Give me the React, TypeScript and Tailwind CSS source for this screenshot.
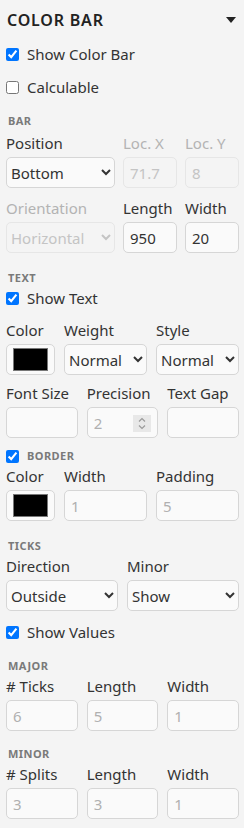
import React from "react";

const font = { fontFamily: '"Noto Sans", "Open Sans", sans-serif' };

const SectionLabel: React.FC<{ text: string; className?: string }> = ({ text, className }) => (
  <div className={`text-[11px] leading-[14px] font-bold tracking-[0.04em] uppercase text-[#7a7a7a] ${className ?? ""}`}>
    {text}
  </div>
);

const Check: React.FC<{ label: string; checked?: boolean; className?: string }> = ({ label, checked, className }) => (
  <label className={`flex items-center gap-2 h-5 text-[15px] text-[#333] ${className ?? ""}`}>
    <input type="checkbox" defaultChecked={checked} className="w-[13px] h-[13px] m-0 accent-[#0075ff]" />
    <span>{label}</span>
  </label>
);

const FieldLabel: React.FC<{ text: string; disabled?: boolean }> = ({ text, disabled }) => (
  <div className={`h-5 leading-5 text-[15px] whitespace-nowrap ${disabled ? "text-[#b3b3b3]" : "text-[#333]"}`}>{text}</div>
);

const Select: React.FC<{ value: string; disabled?: boolean }> = ({ value, disabled }) => (
  <select
    defaultValue={value}
    disabled={disabled}
    className={`w-full h-[31px] rounded-[5px] border pl-0 text-[15px] ${
      disabled ? "border-[#e6e6e6] bg-[#f4f4f4] text-[#c4c4c4]" : "border-[#d6d6d6] bg-[#fafafa] text-[#333]"
    }`}
  >
    <option>{value}</option>
  </select>
);

const TextInput: React.FC<{ value?: string; placeholder?: string; disabled?: boolean; spinner?: boolean }> = ({
  value,
  placeholder,
  disabled,
  spinner,
}) => (
  <div
    className={`relative w-full h-[31px] rounded-[5px] border flex items-center ${
      disabled ? "border-[#e6e6e6] bg-[#f4f4f4]" : "border-[#d6d6d6] bg-[#fafafa]"
    }`}
  >
    <input
      type="text"
      defaultValue={value}
      placeholder={placeholder}
      disabled={disabled}
      className={`w-full min-w-0 h-full px-[6px] text-[15px] outline-none bg-transparent ${
        disabled ? "text-[#c4c4c4]" : "text-[#333]"
      } placeholder:text-[#b0b0b0]`}
    />
    {spinner && (
      <div className="absolute right-[6px] top-[7px] w-[18px] h-[17px] bg-[#e8e8e8] flex items-center justify-center">
        <svg width="10" height="13" viewBox="0 0 10 13" fill="none" stroke="#9a9a9a" strokeWidth="1.2">
          <path d="M2 4.5 L5 1.5 L8 4.5" />
          <path d="M2 8.5 L5 11.5 L8 8.5" />
        </svg>
      </div>
    )}
  </div>
);

const ColorSwatch: React.FC = () => (
  <div className="w-full h-[31px] rounded-[5px] border border-[#d6d6d6] bg-[#fafafa] px-[6px] py-[3px]">
    <div className="w-full h-full bg-black border border-[#777]" />
  </div>
);

const Field: React.FC<{ label: string; disabledLabel?: boolean; children: React.ReactNode }> = ({
  label,
  disabledLabel,
  children,
}) => (
  <div className="flex flex-col min-w-0">
    <FieldLabel text={label} disabled={disabledLabel} />
    <div className="mt-[4px]">{children}</div>
  </div>
);

export default function App() {
  return (
    <div className="w-[244px] h-[828px] bg-[#f4f4f4] pl-[6px] pr-[5px] overflow-hidden" style={font}>
      <div className="h-10 flex items-center justify-between pl-[1px]">
        <span className="text-[16px] font-semibold tracking-[0.05em] text-[#222]">COLOR BAR</span>
        <svg width="10" height="6" viewBox="0 0 10 6" className="mr-[3px]">
          <path d="M0 0 H10 L5 6 Z" fill="#222" />
        </svg>
      </div>

      <Check label="Show Color Bar" checked className="mt-[4px]" />
      <Check label="Calculable" className="mt-[13px]" />

      <SectionLabel text="Bar" className="mt-[17px] pl-[2px]" />
      <div className="grid grid-cols-[109px_1fr_1fr] gap-x-[8px] mt-[5px]">
        <Field label="Position">
          <Select value="Bottom" />
        </Field>
        <Field label="Loc. X" disabledLabel>
          <TextInput value="71.7" disabled />
        </Field>
        <Field label="Loc. Y" disabledLabel>
          <TextInput value="8" disabled />
        </Field>
      </div>
      <div className="grid grid-cols-[109px_1fr_1fr] gap-x-[8px] mt-[10px]">
        <Field label="Orientation" disabledLabel>
          <Select value="Horizontal" disabled />
        </Field>
        <Field label="Length">
          <TextInput value="950" />
        </Field>
        <Field label="Width">
          <TextInput value="20" />
        </Field>
      </div>

      <SectionLabel text="Text" className="mt-[18px] pl-[2px]" />
      <Check label="Show Text" checked className="mt-[3px]" />
      <div className="grid grid-cols-[49px_1fr_1fr] gap-x-[9px] mt-[12px]">
        <Field label="Color">
          <ColorSwatch />
        </Field>
        <Field label="Weight">
          <Select value="Normal" />
        </Field>
        <Field label="Style">
          <Select value="Normal" />
        </Field>
      </div>
      <div className="grid grid-cols-3 gap-x-[9px] mt-[8px]">
        <Field label="Font Size">
          <TextInput />
        </Field>
        <Field label="Precision">
          <TextInput placeholder="2" spinner />
        </Field>
        <Field label="Text Gap">
          <TextInput />
        </Field>
      </div>

      <label className="flex items-center gap-2 h-5 mt-[8px]">
        <input type="checkbox" defaultChecked className="w-[13px] h-[13px] m-0 accent-[#0075ff]" />
        <SectionLabel text="Border" />
      </label>
      <div className="grid grid-cols-[49px_1fr_1fr] gap-x-[9px] mt-0">
        <Field label="Color">
          <ColorSwatch />
        </Field>
        <Field label="Width">
          <TextInput placeholder="1" />
        </Field>
        <Field label="Padding">
          <TextInput placeholder="5" />
        </Field>
      </div>

      <SectionLabel text="Ticks" className="mt-[18px] pl-[2px]" />
      <div className="grid grid-cols-2 gap-x-[9px] mt-[3px]">
        <Field label="Direction">
          <Select value="Outside" />
        </Field>
        <Field label="Minor">
          <Select value="Show" />
        </Field>
      </div>
      <Check label="Show Values" checked className="mt-[11px]" />

      <SectionLabel text="Major" className="mt-[17px] pl-[2px]" />
      <div className="grid grid-cols-3 gap-x-[9px] mt-[3px]">
        <Field label="# Ticks">
          <TextInput placeholder="6" />
        </Field>
        <Field label="Length">
          <TextInput placeholder="5" />
        </Field>
        <Field label="Width">
          <TextInput placeholder="1" />
        </Field>
      </div>

      <SectionLabel text="Minor" className="mt-[16px] pl-[2px]" />
      <div className="grid grid-cols-3 gap-x-[9px] mt-[3px]">
        <Field label="# Splits">
          <TextInput placeholder="3" />
        </Field>
        <Field label="Length">
          <TextInput placeholder="3" />
        </Field>
        <Field label="Width">
          <TextInput placeholder="1" />
        </Field>
      </div>
    </div>
  );
}
